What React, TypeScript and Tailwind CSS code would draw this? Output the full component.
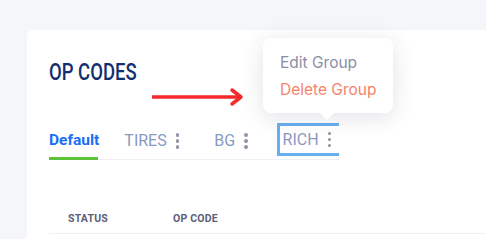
import { Fragment } from "react";

const TABS = ["TIRES", "BG", "RICH"];

function Kebab() {
  return (
    <span className="flex flex-col gap-[2.5px] ml-[9px]">
      <span className="w-[3.5px] h-[3.5px] rounded-full bg-[#8e93a6]" />
      <span className="w-[3.5px] h-[3.5px] rounded-full bg-[#8e93a6]" />
      <span className="w-[3.5px] h-[3.5px] rounded-full bg-[#8e93a6]" />
    </span>
  );
}

export default function App() {
  return (
    <div className="w-[486px] h-[239px] overflow-hidden bg-[#f5f6fa] pl-[27px] pt-[30px] font-['Roboto',sans-serif]">
      <div className="relative bg-white rounded-tl-[6px] h-[260px] pl-[22px] pt-[29px]">
        <h1 className="text-[24px] leading-[26px] text-[#132f70] font-medium origin-left scale-x-[0.77] inline-block whitespace-nowrap">
          OP CODES
        </h1>

        {/* tabs */}
        <div className="mt-[36px] flex items-stretch h-[37px] w-[290px] border-b border-[#eef0f4]">
          <div className="relative flex items-center pr-[25px]">
            <span className="text-[15.5px] font-bold text-[#1a6ef5]">Default</span>
            <span className="absolute left-0 bottom-[-1px] w-[49px] h-[3px] bg-[#5cc23a]" />
          </div>
          {TABS.map((t) => (
            <Fragment key={t}>
              {t === "RICH" ? (
                <div className="flex items-center pl-[3px] w-[62px] mb-[3px] ml-[-6px] border-l-[3px] border-t-[3px] border-b-[3px] border-[#6aaef0]">
                  <span className="text-[16px] text-[#8a99c0]">{t}</span>
                  <Kebab />
                </div>
              ) : (
                <div className="flex items-center mr-[35px]">
                  <span className="text-[16px] text-[#8a99c0]">{t}</span>
                  <Kebab />
                </div>
              )}
            </Fragment>
          ))}
        </div>

        {/* table header */}
        <div className="mt-[44px] flex h-[30px] items-center border-b border-[#eef0f4] pl-[19px] text-[10.5px] font-bold tracking-[0.02em] text-[#5b6078]">
          <span className="w-[105px]">STATUS</span>
          <span>OP CODE</span>
        </div>

        {/* annotation arrow */}
        <svg className="absolute left-[125px] top-[57px]" width="95" height="20" viewBox="0 0 95 20">
          <line x1="0" y1="10" x2="88" y2="10" stroke="#f52a2a" strokeWidth="3.5" />
          <polyline points="80,3 89,10 80,17" fill="none" stroke="#f52a2a" strokeWidth="3.5" strokeLinecap="round" strokeLinejoin="round" />
        </svg>

        {/* popup menu */}
        <div className="absolute left-[236px] top-[8px] w-[130px] h-[75px] rounded-[8px] bg-white shadow-[0_4px_22px_rgba(40,50,80,0.14)] pl-[17px] pt-[11px] font-['Inter',sans-serif] text-[15.5px] leading-[27px]">
          <div className="text-[#8a8ea6]">Edit Group</div>
          <div className="text-[#f6826c]">Delete Group</div>
          <span className="absolute left-[59px] bottom-[-5px] w-[10px] h-[10px] rotate-45 bg-white" />
        </div>
      </div>
    </div>
  );
}
